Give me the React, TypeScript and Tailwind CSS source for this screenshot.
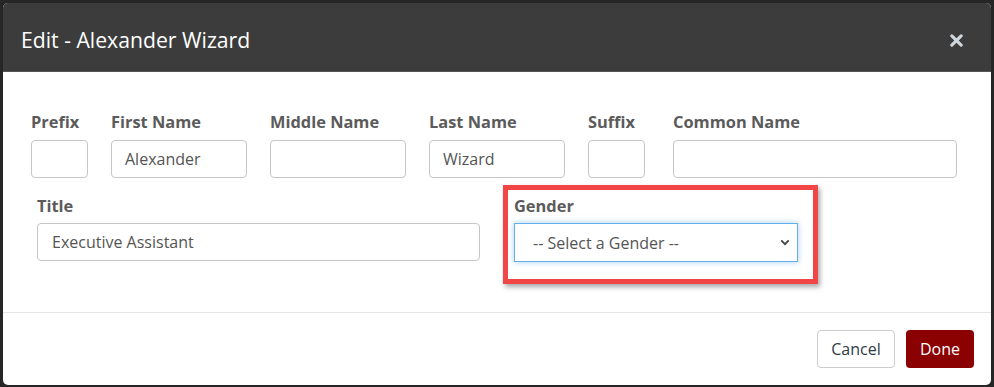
import React from "react";

const font = { fontFamily: '"Open Sans", "Liberation Sans", sans-serif' };

const Field = ({ label, width, value }: { label: string; width: string; value?: string }) => {
  return (
    <div className={`flex flex-col ${width}`}>
      <label className="h-[22px] whitespace-nowrap text-[16.4px] font-bold leading-[22px] text-[#5b5b5b]">{label}</label>
      <input
        readOnly
        value={value ?? ""}
        className="mt-[7px] h-[38px] w-full rounded-[4px] border border-[#c6c6c6] bg-white px-[13px] text-[16px] text-[#555] outline-none"
      />
    </div>
  );
};

export default function App() {
  return (
    <div className="h-[387px] w-[994px] overflow-hidden bg-[#262626] p-[3px]" style={font}>
      <div className="flex h-[382px] w-[988px] flex-col overflow-hidden rounded-[5px] bg-white">
        {/* header */}
        <div className="flex h-[69px] shrink-0 items-center justify-between border-b border-[#555] bg-[#3c3c3c] pl-[18px] pr-[28px] pt-[6px]">
          <h4 className="text-[21.2px] leading-none text-white">Edit - Alexander Wizard</h4>
          <button className="flex h-[14px] w-[14px] items-center justify-center">
            <svg viewBox="0 0 14 14" className="h-[13px] w-[13px]">
              <path d="M2 2 L12 12 M12 2 L2 12" stroke="#cfd6dd" strokeWidth="3.4" strokeLinecap="round" />
            </svg>
          </button>
        </div>

        {/* body */}
        <div className="flex flex-col px-[28px] pt-[39px]">
          <div className="flex gap-[23px]">
            <Field label="Prefix" width="w-[57px]" />
            <Field label="First Name" width="w-[136px]" value="Alexander" />
            <Field label="Middle Name" width="w-[136px]" />
            <Field label="Last Name" width="w-[136px]" value="Wizard" />
            <Field label="Suffix" width="w-[57px]" />
            <div className="ml-[5px]">
              <Field label="Common Name" width="w-[284px]" />
            </div>
          </div>

          <div className="mt-[17px] flex gap-[34px] pl-[6px]">
            <div className="flex w-[443px] flex-col">
              <label className="h-[22px] text-[16.4px] font-bold leading-[22px] text-[#5b5b5b]">Title</label>
              <input
                readOnly
                value="Executive Assistant"
                className="mt-[6px] h-[38px] w-full rounded-[4px] border border-[#c6c6c6] bg-white px-[14px] text-[16px] text-[#555] outline-none"
              />
            </div>
            <div className="relative flex w-[284px] flex-col">
              <label className="h-[22px] text-[16.4px] font-bold leading-[22px] text-[#5b5b5b]">Gender</label>
              <div className="relative mt-[6px]">
                <select className="h-[39px] w-full appearance-none border border-[#66afe9] bg-white pl-[18px] text-[16px] text-[#555] shadow-[0_0_6px_rgba(102,175,233,0.6)] outline-none">
                  <option>-- Select a Gender --</option>
                </select>
                <svg viewBox="0 0 12 8" className="pointer-events-none absolute right-[8px] top-[16px] h-[7px] w-[10px]">
                  <path d="M1.5 1.5 L6 6 L10.5 1.5" fill="none" stroke="#444" strokeWidth="2.2" />
                </svg>
              </div>
              {/* annotation highlight */}
              <div className="pointer-events-none absolute -bottom-[22px] -left-[11px] -right-[20px] -top-[10px] border-[5px] border-[#f24545] shadow-[2px_3px_5px_rgba(0,0,0,0.35)]" />
            </div>
          </div>
        </div>

        {/* footer */}
        <div className="mt-auto flex items-center justify-end gap-[11px] border-t border-[#e5e5e5] pb-[17px] pl-[17px] pr-[17px] pt-[17px]">
          <button className="h-[38px] w-[78px] rounded-[4px] border border-[#cccccc] bg-white text-[16px] text-[#2f3a47]">
            Cancel
          </button>
          <button className="h-[38px] w-[68px] rounded-[4px] bg-[#8b0000] text-[16px] text-white">Done</button>
        </div>
      </div>
    </div>
  );
}
